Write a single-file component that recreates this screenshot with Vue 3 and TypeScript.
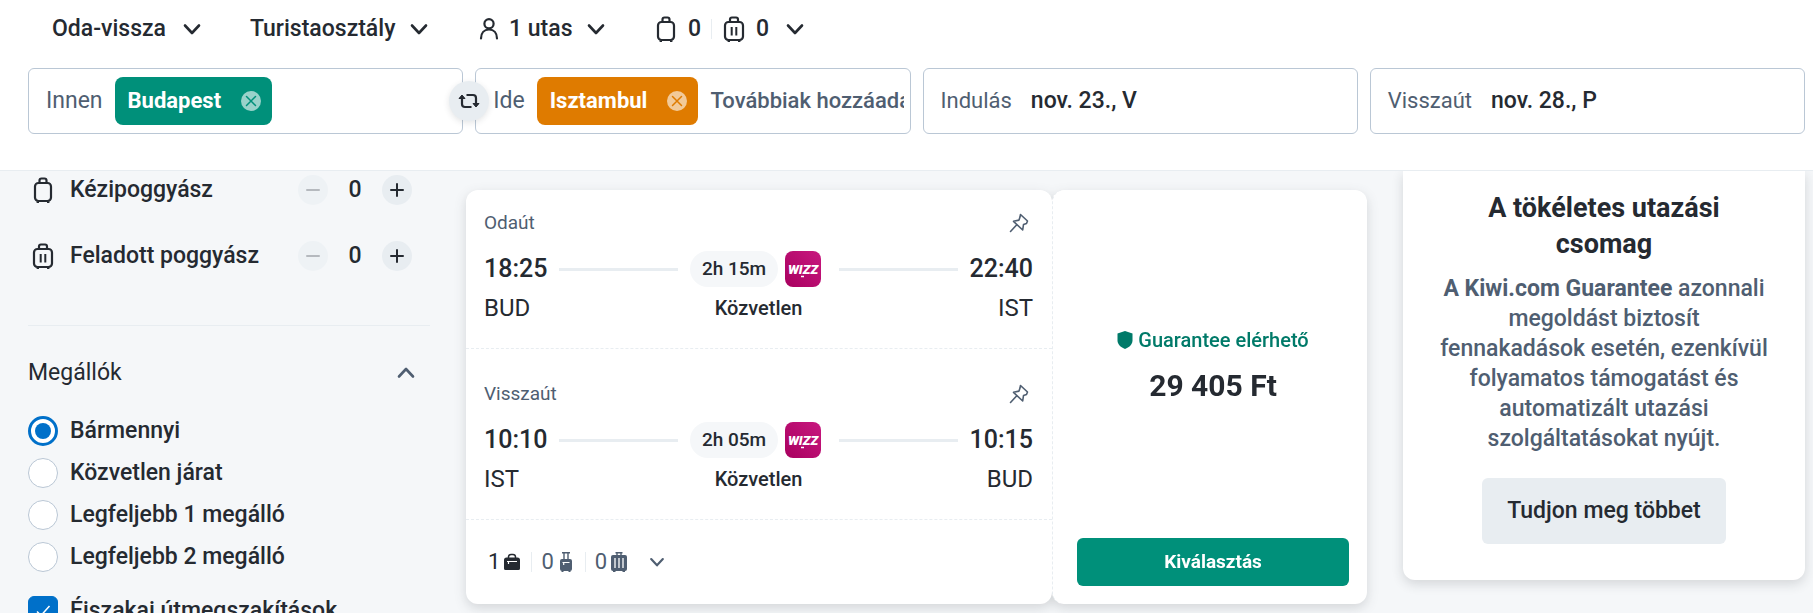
<script setup lang="ts">
import { ref } from 'vue'

interface Leg {
  title: string
  departure: string
  arrival: string
  from: string
  to: string
  duration: string
}

interface BagFilter {
  id: string
  label: string
  kind: 'cabin' | 'checked'
}

const legs: Leg[] = [
  { title: 'Odaút', departure: '18:25', arrival: '22:40', from: 'BUD', to: 'IST', duration: '2h 15m' },
  { title: 'Visszaút', departure: '10:10', arrival: '10:15', from: 'IST', to: 'BUD', duration: '2h 05m' },
]

const bagFilters: BagFilter[] = [
  { id: 'cabin', label: 'Kézipoggyász', kind: 'cabin' },
  { id: 'checked', label: 'Feladott poggyász', kind: 'checked' },
]

const bags = ref<Record<string, number>>({ cabin: 0, checked: 0 })
const stopOptions = ['Bármennyi', 'Közvetlen járat', 'Legfeljebb 1 megálló', 'Legfeljebb 2 megálló']
const stops = ref('Bármennyi')
const overnight = ref(true)
const departureDate = ref('nov. 23., V')
const returnDate = ref('nov. 28., P')
</script>

<template>
  <div class="page">
    <svg class="sprite" aria-hidden="true">
      <symbol id="chevron" viewBox="0 0 24 24">
        <path d="M5 8.500l7 7.500 7-7.500" fill="none" stroke="currentColor" stroke-width="2.600" stroke-linecap="round" stroke-linejoin="round" />
      </symbol>
      <symbol id="cabin" viewBox="0 0 24 28">
        <g fill="none" stroke="currentColor" stroke-width="2.200">
          <rect x="4" y="7" width="16" height="18" rx="3.500" />
          <path d="M8.500 7V4.500A2 2 0 0 1 10.500 2.500h3a2 2 0 0 1 2 2V7" />
          <path d="M6.800 25.500v1.500M17.200 25.500v1.500" stroke-width="2.400" />
        </g>
      </symbol>
      <symbol id="checked" viewBox="0 0 24 28">
        <g fill="none" stroke="currentColor" stroke-width="2.200">
          <rect x="3" y="7" width="18" height="18" rx="3.500" />
          <path d="M8 7V4.500A2 2 0 0 1 10 2.500h4a2 2 0 0 1 2 2V7" />
          <path d="M9.700 12v8.500M14.300 12v8.500" stroke-width="2" />
          <path d="M6.800 25.500v1.500M17.200 25.500v1.500" stroke-width="2.400" />
        </g>
      </symbol>
      <symbol id="close" viewBox="0 0 20 20">
        <circle cx="10" cy="10" r="10" fill="#fff" fill-opacity="0.600" />
        <path d="M5.500 5.500l9 9M14.500 5.500l-9 9" fill="none" stroke="currentColor" stroke-width="1.500" stroke-linecap="round" />
      </symbol>
      <symbol id="pin" viewBox="0 0 24 24">
        <path d="M3.500 20.500l6.500-7M13.500 3.500l7 6.500-1 2.500-3 1-.8 5.500L6.500 10.300l5.500-1.200 1-3z" fill="none" stroke="currentColor" stroke-width="1.600" stroke-linejoin="round" stroke-linecap="round" />
      </symbol>
    </svg>

    <header class="header">
      <nav class="modes">
        <button class="mode" type="button">
          <span>Oda-vissza</span>
          <svg class="icon"><use href="#chevron" /></svg>
        </button>
        <button class="mode" type="button">
          <span>Turistaosztály</span>
          <svg class="icon"><use href="#chevron" /></svg>
        </button>
        <button class="mode" type="button">
          <svg class="icon" viewBox="0 0 24 24" fill="none" stroke="currentColor" stroke-width="2.200" stroke-linecap="round">
            <circle cx="12" cy="6.800" r="4.600" />
            <path d="M4 21.500c0-5.500 3.200-9 8-9s8 3.500 8 9" />
          </svg>
          <span class="grow">1 utas</span>
          <svg class="icon"><use href="#chevron" /></svg>
        </button>
        <button class="mode bags" type="button">
          <svg class="bag"><use href="#cabin" /></svg>
          <span>0</span>
          <i class="bar"></i>
          <svg class="bag"><use href="#checked" /></svg>
          <span class="grow">0</span>
          <svg class="icon"><use href="#chevron" /></svg>
        </button>
      </nav>

      <form class="search" @submit.prevent>
        <div class="field">
          <label for="from">Innen</label>
          <span class="chip chip-from">Budapest
            <button type="button" aria-label="Budapest törlése"><svg><use href="#close" /></svg></button>
          </span>
          <input id="from" type="text" />
          <button class="swap" type="button" aria-label="Csere">
            <svg viewBox="0 0 24 24" fill="none" stroke="currentColor" stroke-width="2.200">
              <path d="M5 8v7a3 3 0 0 0 3 3h6.500M19 16V9a3 3 0 0 0-3-3H9.500" />
              <path d="M2 9.500l3-3.500 3 3.500zM16 14.500l3 3.500 3-3.500z" fill="currentColor" stroke-width="1" />
            </svg>
          </button>
        </div>
        <div class="field">
          <label for="to">Ide</label>
          <span class="chip chip-to">Isztambul
            <button type="button" aria-label="Isztambul törlése"><svg><use href="#close" /></svg></button>
          </span>
          <input id="to" type="text" placeholder="Továbbiak hozzáadása" />
        </div>
        <div class="field dates">
          <label for="out">Indulás</label>
          <input id="out" v-model="departureDate" type="text" readonly />
        </div>
        <div class="field dates">
          <label for="back">Visszaút</label>
          <input id="back" v-model="returnDate" type="text" readonly />
        </div>
      </form>
    </header>

    <main class="content">
      <aside class="filters">
        <div class="bag-rows">
          <div v-for="bag in bagFilters" :key="bag.id" class="bag-row">
            <svg class="bag"><use :href="`#${bag.kind}`" /></svg>
            <span class="grow">{{ bag.label }}</span>
            <button class="step" type="button" aria-label="Kevesebb" :disabled="bags[bag.id] === 0" @click="bags[bag.id]--">
              <svg viewBox="0 0 30 30"><path d="M9 15h12" /></svg>
            </button>
            <output class="count">{{ bags[bag.id] }}</output>
            <button class="step" type="button" aria-label="Több" @click="bags[bag.id]++">
              <svg viewBox="0 0 30 30"><path d="M9 15h12M15 9v12" /></svg>
            </button>
          </div>
        </div>

        <section class="stops">
          <button class="stops-head" type="button">
            <span>Megállók</span>
            <svg class="icon up"><use href="#chevron" /></svg>
          </button>
          <div class="options">
            <label v-for="option in stopOptions" :key="option" class="option">
              <input v-model="stops" type="radio" name="stops" :value="option" />
              <span>{{ option }}</span>
            </label>
          </div>
          <label class="option overnight">
            <span class="tick">
              <input v-model="overnight" type="checkbox" />
              <svg v-if="overnight" viewBox="0 0 30 30"><path d="M9 15.500l4 4L21.500 10" /></svg>
            </span>
            <span>Éjszakai útmegszakítások</span>
          </label>
        </section>
      </aside>

      <article class="result">
        <div class="itinerary">
          <section v-for="leg in legs" :key="leg.title" class="leg">
            <div class="leg-head">
              <span>{{ leg.title }}</span>
              <svg class="icon"><use href="#pin" /></svg>
            </div>
            <div class="leg-times">
              <time>{{ leg.departure }}</time>
              <i class="line"></i>
              <span class="carrier">
                <span class="pill">{{ leg.duration }}</span>
                <svg class="wizz" viewBox="0 0 36 36" role="img" aria-label="Wizz Air">
                  <defs>
                    <linearGradient id="wizz-bg" x1="0" y1="1" x2="1" y2="0">
                      <stop offset="0" stop-color="#a8005f" />
                      <stop offset="1" stop-color="#c8187f" />
                    </linearGradient>
                  </defs>
                  <rect width="36" height="36" rx="8" fill="url(#wizz-bg)" />
                  <text x="18" y="23" text-anchor="middle">WIZZ</text>
                  <path d="M16 25.500h3" stroke="#fff" stroke-width="1.500" />
                </svg>
              </span>
              <i class="line"></i>
              <time>{{ leg.arrival }}</time>
            </div>
            <div class="leg-places">
              <span>{{ leg.from }}</span>
              <span class="direct">Közvetlen</span>
              <span class="end">{{ leg.to }}</span>
            </div>
          </section>
          <button class="allowance" type="button">
            <span class="item included">1
              <svg class="small" viewBox="0 0 16 20">
                <path d="M4.500 6V4.800A2.500 2.500 0 0 1 7 2.500h2a2.500 2.500 0 0 1 2.500 2.300V6" fill="none" stroke="currentColor" stroke-width="1.500" />
                <path d="M2.500 5.500h11A2.500 2.500 0 0 1 16 8v8.500a1.500 1.500 0 0 1-1.500 1.500h-13A1.500 1.500 0 0 1 0 16.500V8a2.500 2.500 0 0 1 2.500-2.500z" fill="currentColor" />
                <path d="M3 9.500h10M4.500 9.500v2.500" fill="none" stroke="#fff" stroke-width="1.200" />
              </svg>
            </span>
            <span class="item">0
              <svg class="small" viewBox="0 0 16 20">
                <path d="M4 .7h8M6 1v7M10 1v7" fill="none" stroke="currentColor" stroke-width="1.400" />
                <rect x="2" y="7" width="12" height="12" rx="2" fill="currentColor" />
                <path d="M4.500 10.500h7M5.700 10.500v2.500" fill="none" stroke="#fff" stroke-width="1.200" />
                <path d="M3.500 19.300h2M10.500 19.300h2" stroke="currentColor" stroke-width="1.200" />
              </svg>
            </span>
            <span class="item">0
              <svg class="small" viewBox="0 0 16 20">
                <path d="M4.500.7h7M6 1v3M10 1v3" fill="none" stroke="currentColor" stroke-width="1.400" />
                <rect y="3" width="16" height="16" rx="2" fill="currentColor" />
                <path d="M4 6v10M8 6v10M12 6v10" stroke="#fff" stroke-width="1.300" />
                <path d="M2 19.300h2.500M11.500 19.300H14" stroke="currentColor" stroke-width="1.200" />
              </svg>
            </span>
            <svg class="more"><use href="#chevron" /></svg>
          </button>
        </div>

        <div class="booking">
          <div class="offer">
            <span class="guarantee">
              <svg viewBox="0 0 16 18"><path d="M8 0l7.500 2.500v7C15.500 13.500 12 16.500 8 18 4 16.500.5 13.500.5 9.500v-7z" fill="currentColor" /></svg>
              Guarantee elérhető
            </span>
            <strong class="price">29 405 Ft</strong>
          </div>
          <button class="select" type="button">Kiválasztás</button>
        </div>
      </article>

      <aside class="promo">
        <h2>A tökéletes utazási csomag</h2>
        <p><strong>A Kiwi.com Guarantee</strong> azonnali megoldást biztosít fennakadások esetén, ezenkívül folyamatos támogatást és automatizált utazási szolgáltatásokat nyújt.</p>
        <button class="learn" type="button">Tudjon meg többet</button>
      </aside>
    </main>
  </div>
</template>

<style>
body {
  margin: 0;
}
</style>

<style scoped>
.page {
  display: flex;
  flex-direction: column;
  height: 100vh;
  overflow: hidden;
  background: #f5f7f9;
  color: #252a31;
  font-family: Roboto, "Noto Sans", sans-serif;
  font-size: 23px;
  font-weight: 500;
  line-height: 30px;
}

*,
*::before {
  box-sizing: border-box;
}

button,
input {
  margin: 0;
  padding: 0;
  border: 0;
  background: none;
  color: inherit;
  font: inherit;
  text-align: left;
}

button {
  cursor: pointer;
}

svg {
  display: block;
  flex: none;
}

.sprite {
  position: absolute;
  width: 0;
  height: 0;
}

.icon {
  width: 24px;
  height: 24px;
}

.bag {
  width: 24px;
  height: 28px;
}

.grow {
  flex: 1;
}

/* Header */
.header {
  position: relative;
  z-index: 1;
  flex: none;
  display: flex;
  flex-direction: column;
  gap: 18px;
  padding: 8px 8px 36px 28px;
  border-bottom: 1px solid #e8edf1;
  background: #fff;
}

.modes {
  display: grid;
  grid-template-columns: 152px 181px 131px 153px;
  column-gap: 46px;
  height: 42px;
  padding-left: 24px;
}

.mode {
  display: flex;
  align-items: center;
  justify-content: space-between;
  gap: 8px;
}

.bags {
  gap: 10px;
}

.bar {
  width: 1px;
  height: 20px;
  background: #e8edf1;
}

.search {
  display: grid;
  grid-template-columns: repeat(4, 1fr);
  gap: 12px;
}

.field {
  position: relative;
  display: flex;
  align-items: center;
  gap: 12px;
  min-width: 0;
  height: 66px;
  padding: 0 6px 0 17px;
  border: 1px solid #bac7d5;
  border-radius: 6px;
}

.field label {
  color: #4f5e71;
  font-weight: 400;
}

.field input {
  flex: 1;
  min-width: 0;
  outline: 0;
}

.field input::placeholder {
  color: #4f5e71;
  font-size: 22px;
  opacity: 1;
}

.dates {
  gap: 19px;
}

.dates label {
  font-size: 22px;
}

.chip {
  display: flex;
  align-items: center;
  gap: 20px;
  height: 48px;
  padding: 0 11px 0 13px;
  border-radius: 8px;
  color: #fff;
  font-size: 22px;
  font-weight: 700;
}

.chip svg {
  width: 20px;
  height: 20px;
}

.chip-from {
  background: #00907a;
}

.chip-from button {
  color: #00907a;
}

.chip-to {
  background: #df7b00;
}

.chip-to button {
  color: #df7b00;
}

.swap {
  position: absolute;
  z-index: 1;
  top: 12px;
  right: -27px;
  display: grid;
  place-items: center;
  width: 40px;
  height: 40px;
  border-radius: 50%;
  background: #e8edf1;
  box-shadow: 0 2px 6px rgba(37, 42, 49, 0.12);
}

.swap svg {
  width: 24px;
  height: 24px;
}

/* Page columns */
.content {
  flex: 1;
  display: grid;
  grid-template-columns: 402px minmax(0, 1fr) 402px;
  align-items: start;
  gap: 36px;
  padding: 0 8px 0 28px;
}

/* Filters */
.bag-rows {
  display: flex;
  flex-direction: column;
  gap: 36px;
  padding: 4px 18px 54px 3px;
  border-bottom: 1px solid #e8edf1;
}

.bag-row {
  display: flex;
  align-items: center;
}

.bag-row .grow {
  padding-left: 15px;
}

.step {
  display: block;
  width: 30px;
  height: 30px;
  border-radius: 50%;
  background: #e8edf1;
}

.step:disabled {
  background: #eef2f5;
  color: #b5b9be;
}

.step svg {
  fill: none;
  stroke: currentColor;
  stroke-width: 2;
  stroke-linecap: round;
}

.count {
  width: 54px;
  text-align: center;
}

.stops-head {
  display: flex;
  align-items: center;
  justify-content: space-between;
  width: 100%;
  margin: 32px 0 28px;
  padding-right: 12px;
  font-weight: 400;
}

.up {
  transform: rotate(180deg);
  color: #4f5e71;
}

.options {
  display: grid;
  gap: 12px;
}

.option {
  display: flex;
  align-items: center;
  gap: 12px;
  white-space: nowrap;
}

.overnight {
  margin-top: 24px;
}

.option input {
  display: grid;
  place-items: center;
  flex: none;
  width: 30px;
  height: 30px;
  border: 1px solid #bac7d5;
  border-radius: 50%;
  background: #fff;
  appearance: none;
}

.option input[type="radio"]:checked {
  border: 3px solid #0070c9;
}

.option input[type="radio"]:checked::before {
  content: "";
  width: 16px;
  height: 16px;
  border-radius: 50%;
  background: #0070c9;
}

.option input[type="checkbox"] {
  border-radius: 6px;
}

.option input[type="checkbox"]:checked {
  border-color: #0070c9;
  background: #0070c9;
}

.tick {
  display: grid;
}

.tick > * {
  grid-area: 1 / 1;
}

.tick svg {
  width: 30px;
  height: 30px;
  fill: none;
  stroke: #fff;
  stroke-width: 1.5px;
  pointer-events: none;
}

/* Result card */
.result {
  display: grid;
  grid-template-columns: minmax(0, 1fr) 315px;
  margin-top: 19px;
  filter: drop-shadow(0 4px 6px rgba(37, 42, 49, 0.16));
}

.itinerary,
.booking {
  border-radius: 12px;
  background: #fff;
}

.leg {
  padding: 30px 19px 25px 18px;
  border-bottom: 1px dashed #e8edf1;
}

.leg:first-child {
  padding-top: 18px;
}

.leg-head {
  display: flex;
  align-items: center;
  justify-content: space-between;
  padding-right: 2px;
  color: #4f5e71;
  font-size: 19px;
  font-weight: 400;
}

.leg-times {
  display: flex;
  align-items: center;
  gap: 12px;
  margin-top: 13px;
  font-size: 25px;
}

.line {
  flex: 1;
  height: 3px;
  background: #e8edf1;
}

.carrier {
  display: flex;
  align-items: center;
  gap: 7px;
  margin-right: 6px;
}

.pill {
  padding: 0 12px;
  border-radius: 18px;
  background: #f5f7f9;
  font-size: 19px;
  line-height: 36px;
}

.wizz {
  width: 36px;
  height: 36px;
}

.wizz text {
  fill: #fff;
  font-size: 13px;
  font-style: italic;
  font-weight: 900;
}

.leg-places {
  display: grid;
  grid-template-columns: 1fr auto 1fr;
  align-items: center;
  margin-top: 6px;
  font-size: 24px;
  font-weight: 400;
}

.direct {
  font-size: 20px;
  font-weight: 500;
}

.end {
  text-align: right;
}

.allowance {
  display: flex;
  align-items: center;
  height: 84px;
  padding-left: 22px;
  color: #4f5e71;
  font-weight: 400;
}

.item {
  display: flex;
  align-items: center;
  gap: 4px;
  margin-right: 9px;
  padding-right: 11px;
  border-right: 1px solid #e8edf1;
  font-size: 22px;
  line-height: 20px;
}

.item:nth-child(3) {
  border: 0;
}

.included {
  color: #252a31;
}

.small {
  width: 16px;
  height: 20px;
}

.more {
  width: 20px;
  height: 20px;
}

.booking {
  display: flex;
  flex-direction: column;
  padding: 1px 18px 18px 24px;
  border-left: 1px dashed #e8edf1;
}

.offer {
  flex: 1;
  display: flex;
  flex-direction: column;
  align-items: center;
  justify-content: center;
  gap: 13px;
}

.guarantee {
  display: flex;
  align-items: center;
  gap: 5px;
  color: #007a69;
  font-size: 20px;
}

.guarantee svg {
  width: 16px;
  height: 18px;
}

.price {
  font-size: 30px;
  font-weight: 700;
  line-height: 36px;
}

.select {
  height: 48px;
  border-radius: 6px;
  background: #00907a;
  color: #fff;
  font-size: 19px;
  font-weight: 700;
  text-align: center;
}

/* Guarantee promo */
.promo {
  display: flex;
  flex-direction: column;
  align-items: center;
  padding: 19px 36px 36px;
  border-radius: 0 0 12px 12px;
  background: #fff;
  box-shadow: 0 4px 12px rgba(37, 42, 49, 0.16);
  text-align: center;
}

.promo h2 {
  max-width: 300px;
  margin: 0;
  font-size: 27px;
  font-weight: 700;
  line-height: 36px;
}

.promo p {
  margin: 12px 0 24px;
  color: #4f5e71;
}

.promo strong {
  font-weight: 700;
}

.learn {
  height: 66px;
  padding: 0 25px;
  border-radius: 6px;
  background: #e8edf1;
}
</style>
